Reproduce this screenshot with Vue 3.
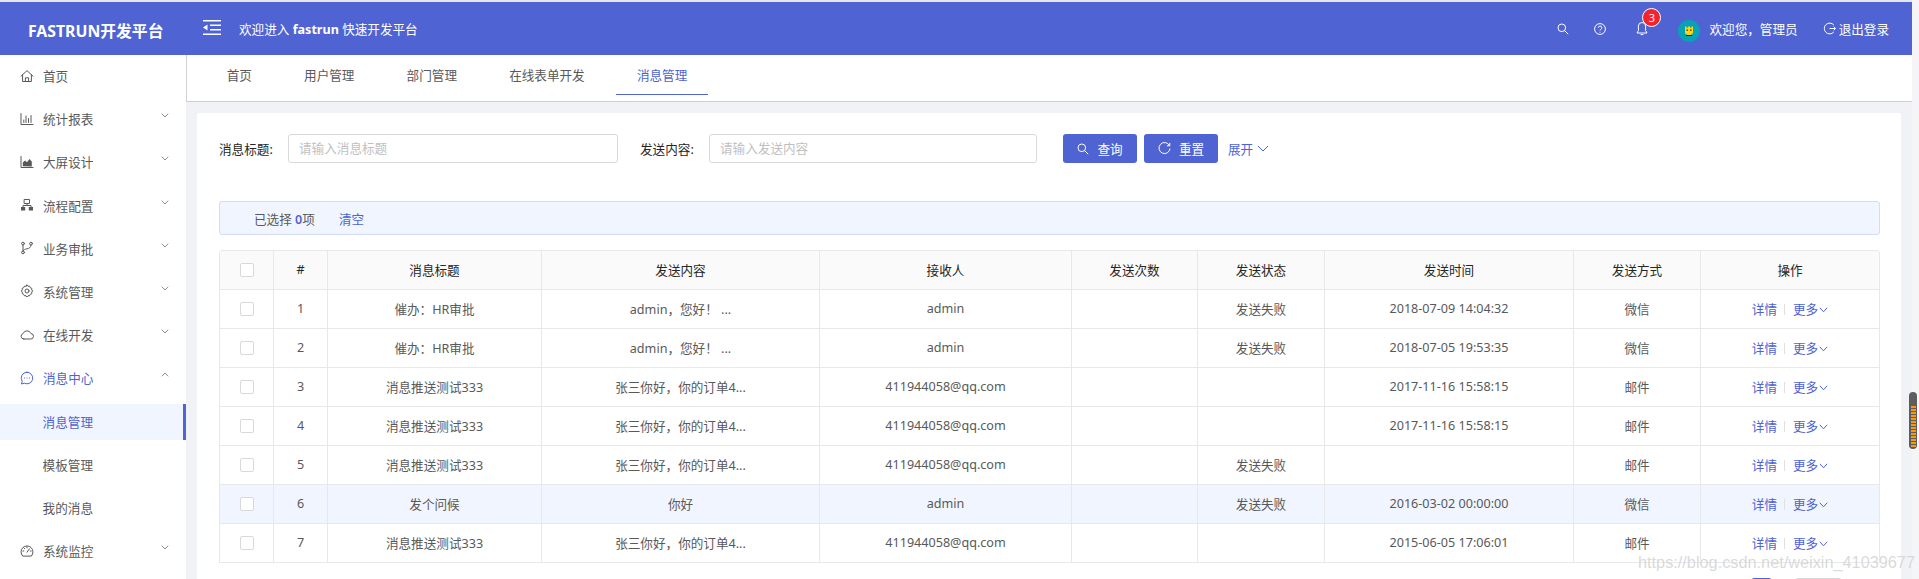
<script setup>
const icons = {
  home: { d: 'M1 7.2 7 1.6l6 5.6M2.6 5.900v6.600h8.800V5.900M5.400 12.500V8.800h3.200v3.700' },
  bars: { d: 'M1 1.500v11h12M3.800 10.500V8M6 10.500V4M8.500 10.500V6.500M11 10.500V3.500' },
  area: { d: 'M1 1.500v11h12', fill: 'M2.800 11.200V7.400L5 5.600l2 1.600 2.400-3.200 2.400 2.400v5z' },
  cluster: { d: 'M4.500 1.500h5v4h-5zM7 5.500v2M3 9V7.500h8V9', fill: 'M1 9h4.200v3.500H1zM8.800 9H13v3.500H8.800z' },
  fork: { d: 'M3 4v6M11 4c0 2.600-2 3.400-4 3.800-2 .4-3.400.8-4 2.200M4.400 2.600a1.400 1.400 0 1 1-2.800 0 1.400 1.400 0 0 1 2.800 0zM12.400 2.600a1.400 1.400 0 1 1-2.800 0 1.400 1.400 0 0 1 2.800 0zM4.400 11.400a1.400 1.400 0 1 1-2.800 0 1.400 1.400 0 0 1 2.800 0z' },
  gear: { d: 'M7 1l1 1.300 1.600-.1.700 1.500 1.500.6-.1 1.600L12.700 7l-1 1.100.1 1.600-1.500.6-.7 1.500-1.600-.1L7 13l-1-1.300-1.600.1-.7-1.500-1.500-.6.1-1.600L1.300 7l1-1.100-.1-1.600 1.500-.6.7-1.500 1.600.1zM9 7a2 2 0 1 1-4 0 2 2 0 0 1 4 0z' },
  cloud: { d: 'M3.800 11h6.700a2.700 2.700 0 0 0 .5-5.400A4.200 4.200 0 0 0 3.100 5.600 2.750 2.750 0 0 0 3.800 11z' },
  msg: { d: 'M7 1.200a5.800 5.800 0 1 1-2.600 11L1.500 13l.7-2.800A5.800 5.800 0 0 1 7 1.200zM4.500 7h.1M7 7h.1M9.500 7h.1' },
  gauge: { d: 'M2.400 11.800A6 6 0 1 1 11.600 11.800zM7 8.200l2.400-3.400M2.800 7h1M10.200 7h1M7 2.800v1M4 4l.7.7' }
}

const menu = [
  { label: '首页', icon: 'home' },
  { label: '统计报表', icon: 'bars', arrow: 'down' },
  { label: '大屏设计', icon: 'area', arrow: 'down' },
  { label: '流程配置', icon: 'cluster', arrow: 'down' },
  { label: '业务审批', icon: 'fork', arrow: 'down' },
  { label: '系统管理', icon: 'gear', arrow: 'down' },
  { label: '在线开发', icon: 'cloud', arrow: 'down' },
  { label: '消息中心', icon: 'msg', arrow: 'up', open: true },
  { label: '消息管理', sub: true, active: true },
  { label: '模板管理', sub: true },
  { label: '我的消息', sub: true },
  { label: '系统监控', icon: 'gauge', arrow: 'down' }
]

const tabs = ['首页', '用户管理', '部门管理', '在线表单开发', '消息管理']

const columns = [
  { title: '消息标题', width: 214 },
  { title: '发送内容', width: 278 },
  { title: '接收人', width: 252 },
  { title: '发送次数', width: 126 },
  { title: '发送状态', width: 127 },
  { title: '发送时间', width: 249 },
  { title: '发送方式', width: 127 }
]

const long = '张三你好，你的订单4...'
const test = '消息推送测试333'
const mail = '411944058@qq.com'
const rows = [
  ['催办：HR审批', 'admin，您好！ ...', 'admin', '', '发送失败', '2018-07-09 14:04:32', '微信'],
  ['催办：HR审批', 'admin，您好！ ...', 'admin', '', '发送失败', '2018-07-05 19:53:35', '微信'],
  [test, long, mail, '', '', '2017-11-16 15:58:15', '邮件'],
  [test, long, mail, '', '', '2017-11-16 15:58:15', '邮件'],
  [test, long, mail, '', '发送失败', '', '邮件'],
  ['发个问候', '你好', 'admin', '', '发送失败', '2016-03-02 00:00:00', '微信'],
  [test, long, mail, '', '', '2015-06-05 17:06:01', '邮件']
]
</script>

<template>
  <div class="page">
    <div class="frame">
      <header class="topbar">
        <div class="logo">FASTRUN开发平台</div>
        <svg class="fold" viewBox="0 0 18 15" width="18" height="15">
          <path d="M0 .75h18M7 5.250h11M7 9.750h11M0 14.250h18" stroke="#fff" stroke-width="1.300" fill="none" />
          <path d="M4.500 4.500v6L0 7.500z" fill="#fff" />
        </svg>
        <div class="welcome">欢迎进入 <b>fastrun</b> 快速开发平台</div>
        <div class="tools">
          <svg class="tool" viewBox="0 0 12 12" width="12" height="12">
            <path d="M8.600 4.800a3.800 3.800 0 1 1-7.600 0 3.800 3.800 0 0 1 7.600 0zM7.600 7.600l3.600 3.600" stroke="#fff" fill="none" />
          </svg>
          <svg class="tool help" viewBox="0 0 12 12" width="12" height="12">
            <circle cx="6" cy="6" r="5.400" stroke="#fff" fill="none" />
            <path d="M4.400 4.700A1.700 1.700 0 1 1 6.700 6.300C6.200 6.600 6 7 6 7.600M6 8.800v.8" stroke="#fff" fill="none" />
          </svg>
          <span class="bell">
            <svg viewBox="0 0 12 15" width="12" height="15">
              <path d="M6 1.500a3.600 3.600 0 0 0-3.600 3.600v4.400L1 12h10L9.600 9.500V5.100A3.600 3.600 0 0 0 6 1.500zM4.600 13.600h2.800" stroke="#fff" fill="none" />
            </svg>
            <em class="badge">3</em>
          </span>
          <svg class="avatar" viewBox="0 0 22 22" width="22" height="22">
            <circle cx="11" cy="11" r="11" fill="#08a2b6" />
            <path d="M7 6.500h1.500v1.200H10V6.500h2v1.200h1.500V6.500H15v5.500c0 1.200-.6 3-4 3s-4-1.800-4-3z" fill="#ffd60a" />
            <path d="M8.500 9.500h1.500v1.300H8.500zM12 9.500h1.500v1.300H12zM8 15h6v1H8z" fill="#3a2c00" />
          </svg>
          <span class="hello">欢迎您，管理员</span>
          <span class="logout">
            <svg viewBox="0 0 13 13" width="13" height="13">
              <path d="M10.800 3A5.400 5.400 0 1 0 10.800 10M6.500 6.500h6M10.700 4.700l1.800 1.800-1.800 1.800" stroke="#fff" fill="none" />
            </svg>
            退出登录
          </span>
        </div>
      </header>

      <div class="body">
        <aside class="side">
          <div
            v-for="m in menu"
            :key="m.label"
            class="item"
            :class="{ sub: m.sub, active: m.active, open: m.open }"
          >
            <svg v-if="m.icon" class="mi" viewBox="0 0 14 14" width="14" height="14">
              <path :d="icons[m.icon].d" fill="none" stroke="currentColor" stroke-linecap="round" />
              <path v-if="icons[m.icon].fill" :d="icons[m.icon].fill" fill="currentColor" />
            </svg>
            <span class="mt">{{ m.label }}</span>
            <svg v-if="m.arrow" class="ma" viewBox="0 0 8 5" width="8" height="5">
              <path :d="m.arrow === 'up' ? 'M.8 4.300 4 1l3.200 3.300' : 'M.8.7 4 4l3.200-3.300'" fill="none" stroke="#8c8c8c" />
            </svg>
          </div>
        </aside>

        <main class="main">
          <nav class="tabs">
            <a v-for="(t, i) in tabs" :key="t" class="tab" :class="{ on: i === 4 }">{{ t }}</a>
          </nav>
          <div class="content">
            <section class="card">
              <form class="form">
                <label class="lab">消息标题:</label>
                <input class="inp w1" placeholder="请输入消息标题" />
                <label class="lab second">发送内容:</label>
                <input class="inp w2" placeholder="请输入发送内容" />
                <button type="button" class="btn first">
                  <svg viewBox="0 0 12 12" width="12" height="12">
                    <path d="M8.600 4.800a3.800 3.800 0 1 1-7.600 0 3.800 3.800 0 0 1 7.600 0zM7.600 7.600l3.600 3.600" stroke="#fff" fill="none" />
                  </svg>
                  查询
                </button>
                <button type="button" class="btn">
                  <svg viewBox="0 0 13 13" width="13" height="13">
                    <path d="M11.400 3.500A5.500 5.500 0 1 0 12 6.500M11.800 .9v2.900H8.900" stroke="#fff" fill="none" />
                  </svg>
                  重置
                </button>
                <a class="more">
                  展开
                  <svg viewBox="0 0 12 7" width="12" height="7">
                    <path d="M1 1l5 5 5-5" stroke="currentColor" fill="none" />
                  </svg>
                </a>
              </form>

              <div class="alert">
                <span>已选择 <b>0</b>项</span>
                <a class="clear">清空</a>
              </div>

              <div class="tbl">
                <table>
                  <colgroup>
                    <col style="width: 54px" />
                    <col style="width: 54px" />
                    <col v-for="c in columns" :key="c.title" :style="{ width: c.width + 'px' }" />
                    <col style="width: 178px" />
                  </colgroup>
                  <thead>
                    <tr>
                      <th><span class="check"></span></th>
                      <th>#</th>
                      <th v-for="c in columns" :key="c.title">{{ c.title }}</th>
                      <th>操作</th>
                    </tr>
                  </thead>
                  <tbody>
                    <tr v-for="(r, i) in rows" :key="i" :class="{ hover: i === 5 }">
                      <td><span class="check"></span></td>
                      <td>{{ i + 1 }}</td>
                      <td v-for="(v, j) in r" :key="j">{{ v }}</td>
                      <td>
                        <a class="act">详情</a><i class="sep"></i><a class="act">更多</a>
                        <svg class="down" viewBox="0 0 9 6" width="9" height="6">
                          <path d="M.8.8 4.500 4.800 8.200.8" stroke="#4f63d2" fill="none" />
                        </svg>
                      </td>
                    </tr>
                  </tbody>
                </table>
              </div>

              <div class="pager">
                <span class="pg cur"></span>
                <span class="pg size"></span>
              </div>
            </section>
          </div>
        </main>
      </div>
    </div>

    <div class="track"><span class="thumb"></span></div>
    <div class="mark">https://blog.csdn.net/weixin_41039677</div>
  </div>
</template>

<style>
html, body { margin: 0; height: 100%; overflow: hidden; }
</style>

<style scoped>
.page {
  position: relative;
  display: flex;
  height: 579px;
  overflow: hidden;
  background: #f5f5f7;
  font-family: "Noto Sans", "Noto Sans CJK SC", sans-serif;
  font-size: 12.6px;
  color: #595959;
}
.frame {
  flex: 1;
  min-width: 0;
  display: flex;
  flex-direction: column;
  padding-top: 2px;
  background: #e6e6e9;
}
.topbar {
  flex: none;
  height: 53px;
  display: flex;
  align-items: center;
  background: #4f63d2;
  color: #fff;
  padding-right: 23px;
}
.logo { width: 203px; padding-left: 28px; padding-top: 3px; box-sizing: border-box; font-size: 15.8px; font-weight: 700; white-space: nowrap; }
.fold { margin-top: -3px; }
.welcome { margin-left: 18px; }
.welcome b { font-weight: 700; }
.tools { margin-left: auto; display: flex; align-items: center; }
.help { margin-left: 25px; }
.bell { position: relative; display: flex; margin-left: 30px; }
.badge {
  position: absolute;
  left: 6px;
  top: -13px;
  width: 19px;
  height: 19px;
  box-sizing: border-box;
  border: 1px solid #fff;
  border-radius: 50%;
  background: #f5222d;
  font-style: normal;
  font-size: 11px;
  line-height: 17px;
  text-align: center;
}
.avatar { margin-left: 30px; margin-top: 5px; }
.hello { margin-left: 9px; }
.logout { margin-left: 25px; display: flex; align-items: center; gap: 3px; }

.body { flex: 1; min-height: 0; display: flex; }
.side { flex: none; width: 186px; padding-top: 3px; background: #fff; box-sizing: border-box; overflow: hidden; }
.item {
  height: 36px;
  margin-bottom: 7.2px;
  display: flex;
  align-items: center;
  padding-left: 20px;
  position: relative;
  box-sizing: border-box;
}
.mi { flex: none; color: #595959; margin-right: 9px; margin-top: -1px; }
.mt { white-space: nowrap; margin-top: -1px; }
.ma { position: absolute; left: 161px; top: 12px; }
.sub { padding-left: 42.600px; }
.open .mi, .open .mt { color: #4f63d2; }
.active { background: #f0f5ff; color: #4f63d2; border-right: 3px solid #4f63d2; }

.main { flex: 1; min-width: 0; display: flex; flex-direction: column; background: #f0f2f5; }
.tabs {
  flex: none;
  height: 47px;
  box-sizing: border-box;
  display: flex;
  padding: 3px 0 0 19px;
  background: #fff;
  border-left: 1px solid #d0d0d0;
  border-bottom: 1px solid #cfcfcf;
}
.tab {
  height: 37px;
  line-height: 36px;
  padding: 0 20.700px;
  margin-right: 10.800px;
  box-sizing: border-box;
  white-space: nowrap;
}
.tab.on { color: #4f63d2; border-bottom: 1px solid #4f63d2; }

.content { flex: 1; padding: 11px 11px 0; min-height: 0; }
.card { background: #fff; padding: 21px 21px 30px 22px; border-radius: 2px; }
.form { display: flex; align-items: center; height: 29px; margin: 0; }
.lab { width: 56px; margin-right: 13px; color: #262626; white-space: nowrap; }
.lab.second { margin-left: 22px; }
.inp {
  height: 29px;
  box-sizing: border-box;
  border: 1px solid #d9d9d9;
  border-radius: 3px;
  padding: 0 10px;
  font: inherit;
  outline: none;
  background: #fff;
}
.inp::placeholder { color: #bfbfbf; }
.w1 { width: 330px; }
.w2 { width: 328px; }
.btn {
  width: 74px;
  height: 29px;
  border: 0;
  border-radius: 3px;
  margin-left: 7px;
  padding: 0;
  background: #4f63d2;
  color: #fff;
  font: inherit;
  display: flex;
  align-items: center;
  justify-content: center;
  gap: 8px;
}
.btn.first { margin-left: 26px; }
.more { margin-left: 10px; margin-top: -1px; color: #4f63d2; display: flex; align-items: center; gap: 4px; }

.alert {
  margin-top: 38px;
  height: 34px;
  box-sizing: border-box;
  border: 1px solid #d3dcf6;
  border-radius: 3px;
  background: #f0f5ff;
  padding-left: 34px;
  display: flex;
  align-items: center;
}
.alert b { color: #4f63d2; font-weight: 600; }
.clear { margin-left: 24px; color: #4f63d2; }

.tbl { margin-top: 15px; border: 1px solid #e8e8e8; border-bottom: 0; border-radius: 4px 4px 0 0; overflow: hidden; }
table { width: 100%; table-layout: fixed; border-collapse: separate; border-spacing: 0; }
th, td {
  height: 39px;
  padding: 0 0 2px;
  box-sizing: border-box;
  text-align: center;
  border-right: 1px solid #e8e8e8;
  border-bottom: 1px solid #e8e8e8;
  white-space: nowrap;
  overflow: hidden;
}
th:last-child, td:last-child { border-right: 0; }
th { background: #fafafa; color: #262626; font-weight: 400; }
tr.hover td { background: #f0f5ff; }
.check {
  display: inline-block;
  width: 14px;
  height: 14px;
  box-sizing: border-box;
  border: 1px solid #d9d9d9;
  border-radius: 2px;
  background: #fff;
  vertical-align: middle;
}
.act { color: #4f63d2; }
.sep { display: inline-block; width: 1px; height: 11px; background: #e0e0e0; margin: 0 8px 0 7px; vertical-align: -1px; }
.down { margin-left: 1px; vertical-align: 1px; }

.pager { display: flex; justify-content: flex-end; margin-top: 15px; padding-right: 38px; }
.pg { height: 29px; box-sizing: border-box; border-radius: 3px; background: #fff; }
.cur { width: 21px; border: 1px solid #4f63d2; }
.size { width: 47px; margin-left: 23px; border: 1px solid #d9d9d9; }

.track { flex: none; width: 7px; background: #f5f5f7; }
.thumb {
  position: absolute;
  left: 1909px;
  top: 392px;
  width: 8px;
  height: 57px;
  border-radius: 4px;
  background:
    repeating-linear-gradient(#f59a0c 0 2px, #5d5d5d 2px 3px) 1.500px 14px / 5px 41px no-repeat,
    #5d5d5d;
}
.mark {
  position: absolute;
  left: 1638px;
  top: 551px;
  font-family: "Liberation Sans", sans-serif;
  font-size: 16.3px;
  line-height: 22px;
  color: rgba(185, 185, 185, 0.55);
  text-shadow: 0 0 1px rgba(255, 255, 255, 0.7);
  white-space: nowrap;
}
</style>
